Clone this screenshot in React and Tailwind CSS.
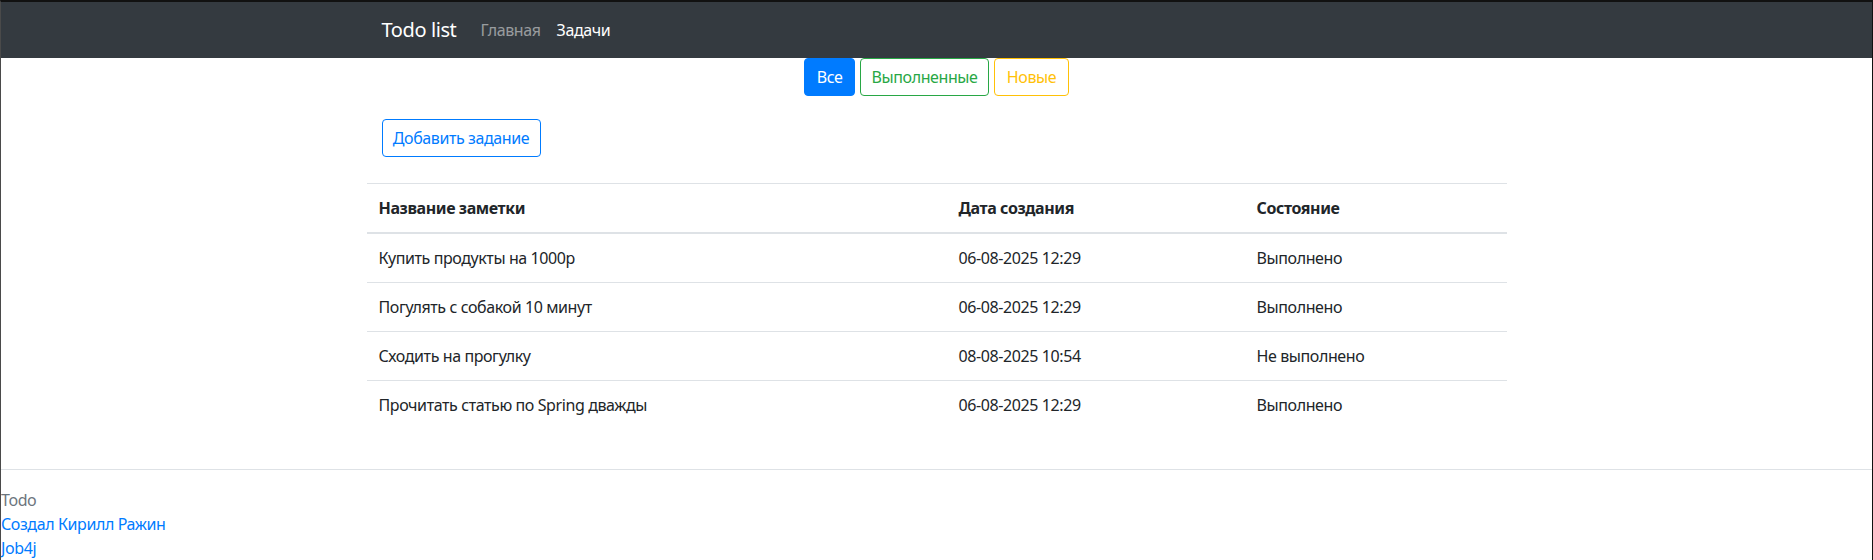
import React from "react";

const tasks = [
  { title: "Купить продукты на 1000р", created: "06-08-2025 12:29", done: true },
  { title: "Погулять с собакой 10 минут", created: "06-08-2025 12:29", done: true },
  { title: "Сходить на прогулку", created: "08-08-2025 10:54", done: false },
  { title: "Прочитать статью по Spring дважды", created: "06-08-2025 12:29", done: true },
];

export default function App() {
  return (
    <div
      className="h-[560px] overflow-hidden bg-white text-[16px] leading-6 tracking-[-0.4px] text-[#212529] border-t-2 border-t-[#111] border-l border-l-[#4a4a4a] border-r border-r-[#111]"
      style={{ fontFamily: '"Noto Sans", "Open Sans", sans-serif' }}
    >
      {/* navbar */}
      <nav className="bg-[#343a40] px-4 py-2">
        <div className="max-w-[1140px] mx-auto px-[15px] flex items-center">
          <a href="#" className="text-[20px] leading-[30px] py-[5px] mr-4 text-white">
            Todo list
          </a>
          <a href="#" className="px-2 py-2 text-white/50">Главная</a>
          <a href="#" className="px-2 py-2 text-white">Задачи</a>
        </div>
      </nav>

      <div className="max-w-[1140px] mx-auto">
        {/* filters */}
        <div className="flex justify-center gap-[5px]">
          <button className="h-[38px] w-[51px] rounded border border-[#007bff] bg-[#007bff] text-white">
            Все
          </button>
          <button className="h-[38px] w-[129px] rounded border border-[#28a745] text-[#28a745]">
            Выполненные
          </button>
          <button className="h-[38px] w-[75px] rounded border border-[#ffc107] text-[#ffc107]">
            Новые
          </button>
        </div>

        <div className="px-[15px] mt-[23px]">
          <button className="h-[38px] w-[159px] rounded border border-[#007bff] text-[#007bff]">
            Добавить задание
          </button>
        </div>

        {/* table */}
        <table className="w-full mt-[26px] border-collapse text-left">
          <thead>
            <tr>
              <th className="w-[580px] px-3 py-3 border-t border-b-2 border-[#dee2e6] font-bold">Название заметки</th>
              <th className="w-[298px] px-3 py-3 border-t border-b-2 border-[#dee2e6] font-bold">Дата создания</th>
              <th className="w-[262px] px-3 py-3 border-t border-b-2 border-[#dee2e6] font-bold">Состояние</th>
            </tr>
          </thead>
          <tbody>
            {tasks.map((t, i) => (
              <tr key={i}>
                <td className={`px-3 py-3 ${i > 0 ? "border-t border-[#dee2e6]" : ""}`}>{t.title}</td>
                <td className={`px-3 py-3 ${i > 0 ? "border-t border-[#dee2e6]" : ""}`}>{t.created}</td>
                <td className={`px-3 py-3 ${i > 0 ? "border-t border-[#dee2e6]" : ""}`}>
                  {t.done ? "Выполнено" : "Не выполнено"}
                </td>
              </tr>
            ))}
          </tbody>
        </table>
      </div>

      {/* footer */}
      <footer className="mt-[40px] border-t border-[#dee2e6] pt-[18px]">
        <div className="text-[#6c757d]">Todo</div>
        <a href="#" className="block text-[#007bff]">Создал Кирилл Ражин</a>
        <a href="#" className="block text-[#007bff]">Job4j</a>
      </footer>
    </div>
  );
}
